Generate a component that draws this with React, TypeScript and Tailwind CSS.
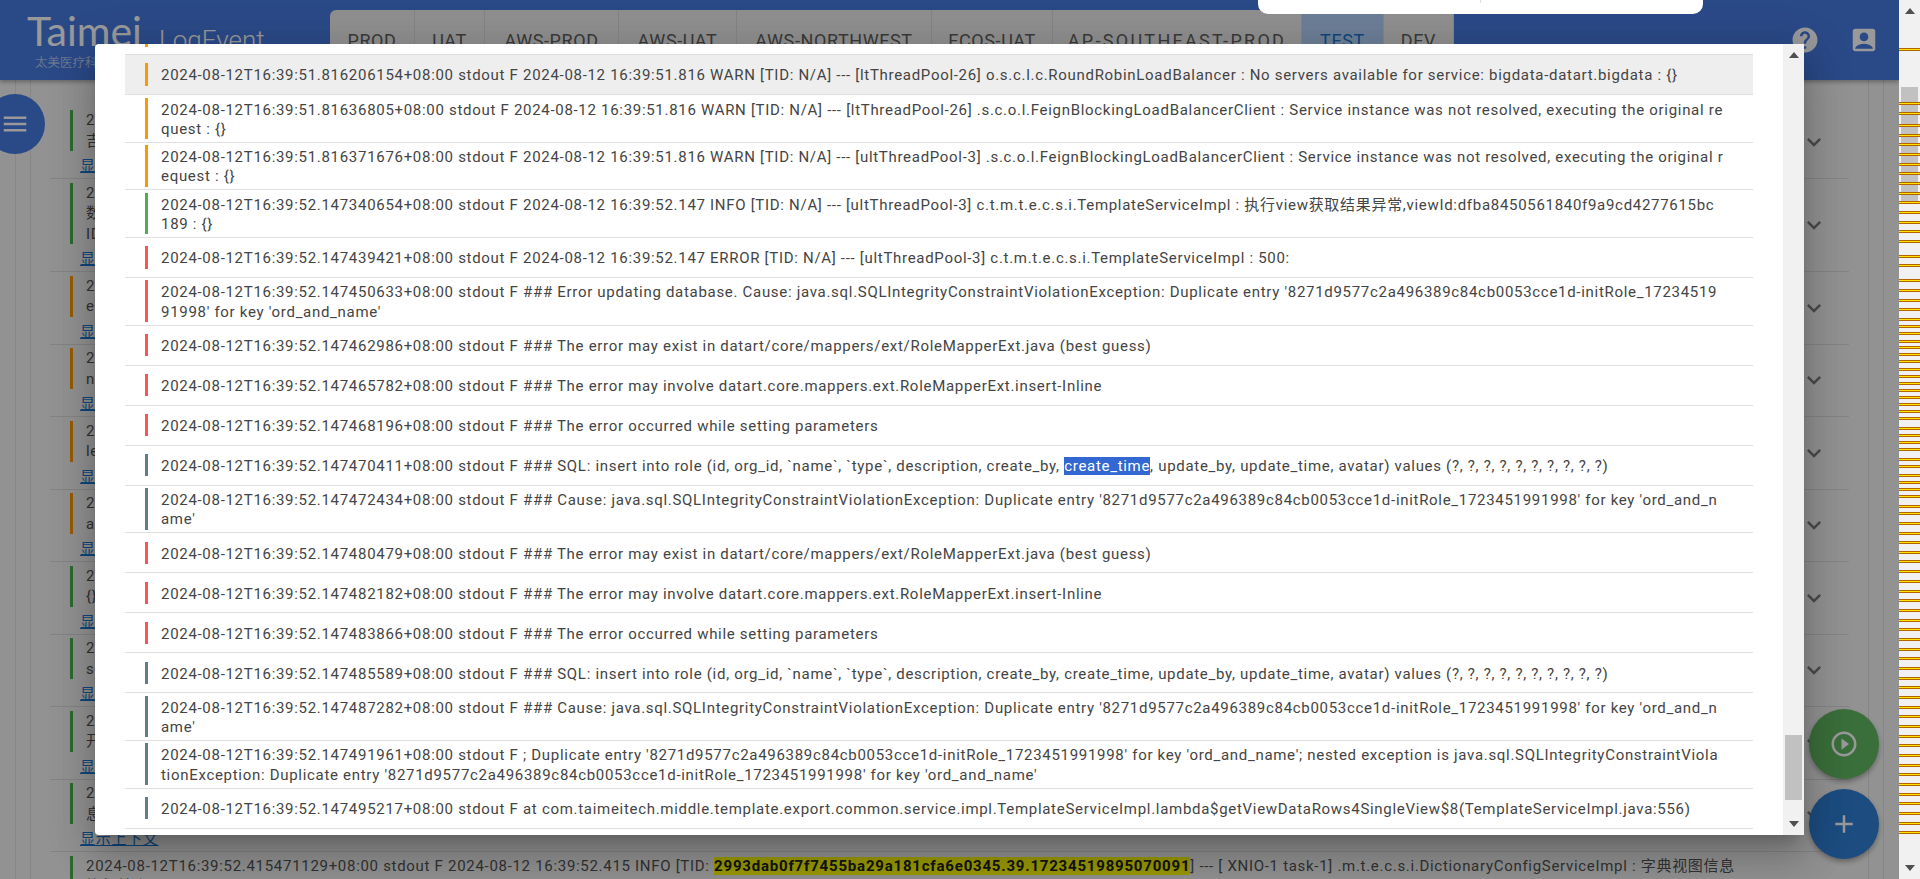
import { FC, ReactNode } from "react";
import { MdAccountBox, MdAdd, MdExpandMore, MdHelp, MdMenu, MdPlayCircleOutline } from "react-icons/md";

type LogLine = {
    text: ReactNode;
    bar: string;
    active?: boolean;
    wide?: boolean;
}

const WARN = "border-[#ff9800]";
const INFO = "border-[#4caf50]";
const ERROR = "border-[#ff5252]";
const DEBUG = "border-[#607d8b]";

const logs: LogLine[] = [
    { bar: WARN, active: true, text: "2024-08-12T16:39:51.816206154+08:00 stdout F 2024-08-12 16:39:51.816 WARN [TID: N/A] --- [ltThreadPool-26] o.s.c.l.c.RoundRobinLoadBalancer : No servers available for service: bigdata-datart.bigdata : {}" },
    { bar: WARN, wide: true, text: "2024-08-12T16:39:51.81636805+08:00 stdout F 2024-08-12 16:39:51.816 WARN [TID: N/A] --- [ltThreadPool-26] .s.c.o.l.FeignBlockingLoadBalancerClient : Service instance was not resolved, executing the original request : {}" },
    { bar: WARN, wide: true, text: "2024-08-12T16:39:51.816371676+08:00 stdout F 2024-08-12 16:39:51.816 WARN [TID: N/A] --- [ultThreadPool-3] .s.c.o.l.FeignBlockingLoadBalancerClient : Service instance was not resolved, executing the original request : {}" },
    { bar: INFO, text: "2024-08-12T16:39:52.147340654+08:00 stdout F 2024-08-12 16:39:52.147 INFO [TID: N/A] --- [ultThreadPool-3] c.t.m.t.e.c.s.i.TemplateServiceImpl : 执行view获取结果异常,viewId:dfba8450561840f9a9cd4277615bc189 : {}" },
    { bar: ERROR, text: "2024-08-12T16:39:52.147439421+08:00 stdout F 2024-08-12 16:39:52.147 ERROR [TID: N/A] --- [ultThreadPool-3] c.t.m.t.e.c.s.i.TemplateServiceImpl : 500:" },
    { bar: ERROR, text: "2024-08-12T16:39:52.147450633+08:00 stdout F ### Error updating database. Cause: java.sql.SQLIntegrityConstraintViolationException: Duplicate entry '8271d9577c2a496389c84cb0053cce1d-initRole_1723451991998' for key 'ord_and_name'" },
    { bar: ERROR, text: "2024-08-12T16:39:52.147462986+08:00 stdout F ### The error may exist in datart/core/mappers/ext/RoleMapperExt.java (best guess)" },
    { bar: ERROR, text: "2024-08-12T16:39:52.147465782+08:00 stdout F ### The error may involve datart.core.mappers.ext.RoleMapperExt.insert-Inline" },
    { bar: ERROR, text: "2024-08-12T16:39:52.147468196+08:00 stdout F ### The error occurred while setting parameters" },
    {
        bar: DEBUG,
        text: (
            <>
                2024-08-12T16:39:52.147470411+08:00 stdout F ### SQL: insert into role (id, org_id, `name`, `type`, description, create_by, <span className="bg-[#3367d1] text-white">create_time</span>, update_by, update_time, avatar) values (?, ?, ?, ?, ?, ?, ?, ?, ?, ?)
            </>
        ),
    },
    { bar: DEBUG, text: "2024-08-12T16:39:52.147472434+08:00 stdout F ### Cause: java.sql.SQLIntegrityConstraintViolationException: Duplicate entry '8271d9577c2a496389c84cb0053cce1d-initRole_1723451991998' for key 'ord_and_name'" },
    { bar: ERROR, text: "2024-08-12T16:39:52.147480479+08:00 stdout F ### The error may exist in datart/core/mappers/ext/RoleMapperExt.java (best guess)" },
    { bar: ERROR, text: "2024-08-12T16:39:52.147482182+08:00 stdout F ### The error may involve datart.core.mappers.ext.RoleMapperExt.insert-Inline" },
    { bar: ERROR, text: "2024-08-12T16:39:52.147483866+08:00 stdout F ### The error occurred while setting parameters" },
    { bar: DEBUG, text: "2024-08-12T16:39:52.147485589+08:00 stdout F ### SQL: insert into role (id, org_id, `name`, `type`, description, create_by, create_time, update_by, update_time, avatar) values (?, ?, ?, ?, ?, ?, ?, ?, ?, ?)" },
    { bar: DEBUG, text: "2024-08-12T16:39:52.147487282+08:00 stdout F ### Cause: java.sql.SQLIntegrityConstraintViolationException: Duplicate entry '8271d9577c2a496389c84cb0053cce1d-initRole_1723451991998' for key 'ord_and_name'" },
    { bar: DEBUG, text: "2024-08-12T16:39:52.147491961+08:00 stdout F ; Duplicate entry '8271d9577c2a496389c84cb0053cce1d-initRole_1723451991998' for key 'ord_and_name'; nested exception is java.sql.SQLIntegrityConstraintViolationException: Duplicate entry '8271d9577c2a496389c84cb0053cce1d-initRole_1723451991998' for key 'ord_and_name'" },
    { bar: DEBUG, text: "2024-08-12T16:39:52.147495217+08:00 stdout F at com.taimeitech.middle.template.export.common.service.impl.TemplateServiceImpl.lambda$getViewDataRows4SingleView$8(TemplateServiceImpl.java:556)" },
];

const pageRows: { bar: string; lines: string[] }[] = [
    { bar: INFO, lines: ["2024-08-12T16:39:51", "吉"] },
    { bar: INFO, lines: ["2024-08-12T16:39:51", "数", "ID"] },
    { bar: WARN, lines: ["2024-08-12T16:39:51", "e"] },
    { bar: WARN, lines: ["2024-08-12T16:39:51", "n"] },
    { bar: WARN, lines: ["2024-08-12T16:39:51", "le"] },
    { bar: WARN, lines: ["2024-08-12T16:39:51", "a"] },
    { bar: INFO, lines: ["2024-08-12T16:39:52", "{}"] },
    { bar: INFO, lines: ["2024-08-12T16:39:52", "s"] },
    { bar: INFO, lines: ["2024-08-12T16:39:52", "开"] },
    { bar: INFO, lines: ["2024-08-12T16:39:52", "息"] },
];

const tabs = [
    { name: "PROD", width: "w-[85px]" },
    { name: "UAT", width: "w-[70px]" },
    { name: "AWS-PROD", width: "w-[134px]" },
    { name: "AWS-UAT", width: "w-[118px]" },
    { name: "AWS-NORTHWEST", width: "w-[195px]" },
    { name: "ECOS-UAT", width: "w-[121px]" },
    { name: "AP-SOUTHEAST-PROD", width: "w-[249px] tracking-[2.3px]" },
    { name: "TEST", width: "w-[82px]", active: true },
    { name: "DEV", width: "w-[70px]" },
];

const scrollMarks = [
    49, 103, 113, 125, 135, 144, 154, 164, 173, 183, 193, 202, 212, 222, 231, 241, 256, 265, 280, 290, 300, 309, 319, 326, 333,
    341, 347, 354, 361, 369, 376, 383, 390, 397, 404, 411, 418, 428, 435, 442, 449, 459, 466, 475, 482, 489, 496, 506, 513, 523,
    533, 542, 552, 561, 571, 581, 591, 600, 610, 620, 629, 639, 649, 658, 668, 678, 687, 697, 707, 716, 726, 736, 745, 755, 765,
    774, 784, 794, 803, 813, 823, 832,
];

const Arrow: FC<{ down?: boolean }> = ({ down }) => (
    <svg width="10" height="6" viewBox="0 0 10 6" className="fill-[#505050]">
        <polygon points={down ? "0,0 10,0 5,6" : "5,0 10,6 0,6"} />
    </svg>
);

const Header = () => (
    <header className="flex h-[80px] shrink-0 bg-[#467ae2] shadow-[0_2px_4px_rgba(0,0,0,0.3)] relative">
        <div className="w-[330px] shrink-0 pl-[27px] pt-[8px] text-white">
            <div className="flex items-start">
                <span className="font-['Lato',sans-serif] font-normal text-[41px] leading-[46px]">Taimei</span>
                <span className="ml-[17px] mt-[15px] font-['Roboto',sans-serif] font-light text-[26px] leading-[34px]">LogEvent</span>
            </div>
            <div className="pl-[8px] -mt-[2px] text-[12.5px] leading-[14px] font-['Noto_Sans_CJK_SC',sans-serif] font-light opacity-80">太美医疗科技</div>
        </div>
        <nav className="flex self-start mt-[10px] h-[70px] rounded-t-[6px] overflow-hidden bg-[#eeeeee] font-['Roboto',sans-serif] text-[18px] tracking-[0.6px] text-[#616161]">
            {tabs.map((tab) => (
                <div
                    key={tab.name}
                    className={`${tab.width} pt-[19px] leading-[24px] text-center border-r border-[#dddddd] ${tab.active ? "bg-[#b4d3fb] text-[#1976d2]" : ""}`}
                >
                    {tab.name}
                </div>
            ))}
        </nav>
        <div className="ml-auto mr-[20px] flex items-center gap-[29px] text-white">
            <MdHelp size={30} />
            <MdAccountBox size={30} />
        </div>
    </header>
);

const PageRow: FC<{ bar: string; lines: string[] }> = ({ bar, lines }) => (
    <div className="flex items-center border-b border-[#dcdcdc] pl-[20px] pr-[21px]">
        <div className="flex-1 pt-[3.5px]">
            <div className={`border-l-[3px] ${bar} pl-[13px] leading-[20.5px]`}>
                {lines.map((line) => (
                    <div key={line}>{line}</div>
                ))}
            </div>
            <div className="h-[27px] pl-[13px] -ml-[3px] leading-[31px] text-[#1976d2] underline">显示上下文</div>
        </div>
        <MdExpandMore size={28} className="text-[#7c7c7c]" />
    </div>
);

const PageList = () => (
    <div className="flex-1 px-[15px] overflow-hidden">
        <div className="h-full px-[14px] border-x border-[#dfdfdf]">
            <div className="h-full px-[19px] border-x border-[#dfdfdf] pt-[26.5px] font-['Roboto','Noto_Sans_CJK_SC',sans-serif] text-[15px] tracking-[0.7px] text-[#555555]">
                {pageRows.map((row, i) => (
                    <PageRow key={i} bar={row.bar} lines={row.lines} />
                ))}
                <div className="pl-[20px] pt-[3.5px]">
                    <div className={`border-l-[3px] ${INFO} pl-[13px] leading-[20.5px] w-[1670px]`}>
                        2024-08-12T16:39:52.415471129+08:00 stdout F 2024-08-12 16:39:52.415 INFO [TID: <span className="bg-[#ffff00] font-bold tracking-[0.8px] text-[#222222]">2993dab0f7f7455ba29a181cfa6e0345.39.17234519895070091</span>] --- [ XNIO-1 task-1] .m.t.e.c.s.i.DictionaryConfigServiceImpl : 字典视图信息执行结束 : {}
                    </div>
                </div>
            </div>
        </div>
    </div>
);

const LogModal = () => (
    <div className="absolute left-[95px] top-[44px] w-[1709px] h-[791px] flex bg-white rounded-l-[4px] shadow-[0_11px_15px_-7px_rgba(0,0,0,0.2),0_24px_38px_3px_rgba(0,0,0,0.14),0_9px_46px_8px_rgba(0,0,0,0.12)] overflow-hidden">
        <div className="flex-1 px-[30px] overflow-hidden font-['Roboto','Noto_Sans_CJK_SC',sans-serif] text-[15px] tracking-[0.7px] text-[#444444]">
            <div className="h-[11px] pl-[20px] border-b border-[#e0e0e0]">
                <div className={`h-[3px] border-l-[3px] ${WARN}`} />
            </div>
            {logs.map((log, i) => (
                <div key={i} className={`flex items-center min-h-[40px] py-[2.5px] pl-[20px] border-b border-[#e0e0e0] ${log.wide ? "pr-[28px]" : "pr-[34px]"} ${log.active ? "bg-[#eeeeee]" : ""}`}>
                    <div className={`pt-[3px] border-l-[3px] ${log.bar} pl-[13px] leading-[19.33px] break-all`}>{log.text}</div>
                </div>
            ))}
        </div>
        <div className="relative w-[21px] shrink-0 bg-[#f1f1f1] flex flex-col items-center justify-between py-[8px]">
            <Arrow />
            <div className="absolute left-[2px] top-[691px] w-[17px] h-[65px] bg-[#c1c1c1]" />
            <Arrow down />
        </div>
    </div>
);

const App = () => {
    return (
        <div className="flex w-full h-[879px] overflow-hidden bg-[#f1f1f1]">
            <main className="relative flex-1 flex flex-col overflow-hidden bg-[#f3f3f3]">
                <Header />
                <PageList />
                <button className="absolute left-[-15px] top-[94px] w-[60px] h-[60px] rounded-full bg-[#467ae2] text-white flex items-center justify-center">
                    <MdMenu size={30} />
                </button>
                <button className="absolute left-[1809px] top-[709px] w-[70px] h-[70px] rounded-full bg-[#62b862] text-white flex items-center justify-center shadow-[0_3px_5px_rgba(0,0,0,0.3)]">
                    <MdPlayCircleOutline size={30} />
                </button>
                <button className="absolute left-[1809px] top-[789px] w-[70px] h-[70px] rounded-full bg-[#2f7fd5] text-white flex items-center justify-center shadow-[0_3px_5px_rgba(0,0,0,0.3)]">
                    <MdAdd size={30} />
                </button>
                <div className="absolute inset-0 bg-black/40" />
                <LogModal />
                <div className="absolute left-[1258px] top-0 w-[445px] h-[14px] bg-white rounded-b-[10px]">
                    <div className="mx-auto w-px h-[3px] bg-[#dddddd]" />
                </div>
            </main>
            <aside className="relative w-[21px] shrink-0 bg-[#f1f1f1] flex flex-col items-center justify-between py-[8px]">
                <Arrow />
                <div className="absolute left-[2px] top-[87px] w-[17px] h-[116px] bg-[#c1c1c1]" />
                {scrollMarks.map((y) => (
                    <div key={y} className="absolute left-0 w-full h-[3px] bg-[#ffe600] border-y border-[#b86200]" style={{ top: y - 1 }} />
                ))}
                <Arrow down />
            </aside>
        </div>
    );
};

export default App;
